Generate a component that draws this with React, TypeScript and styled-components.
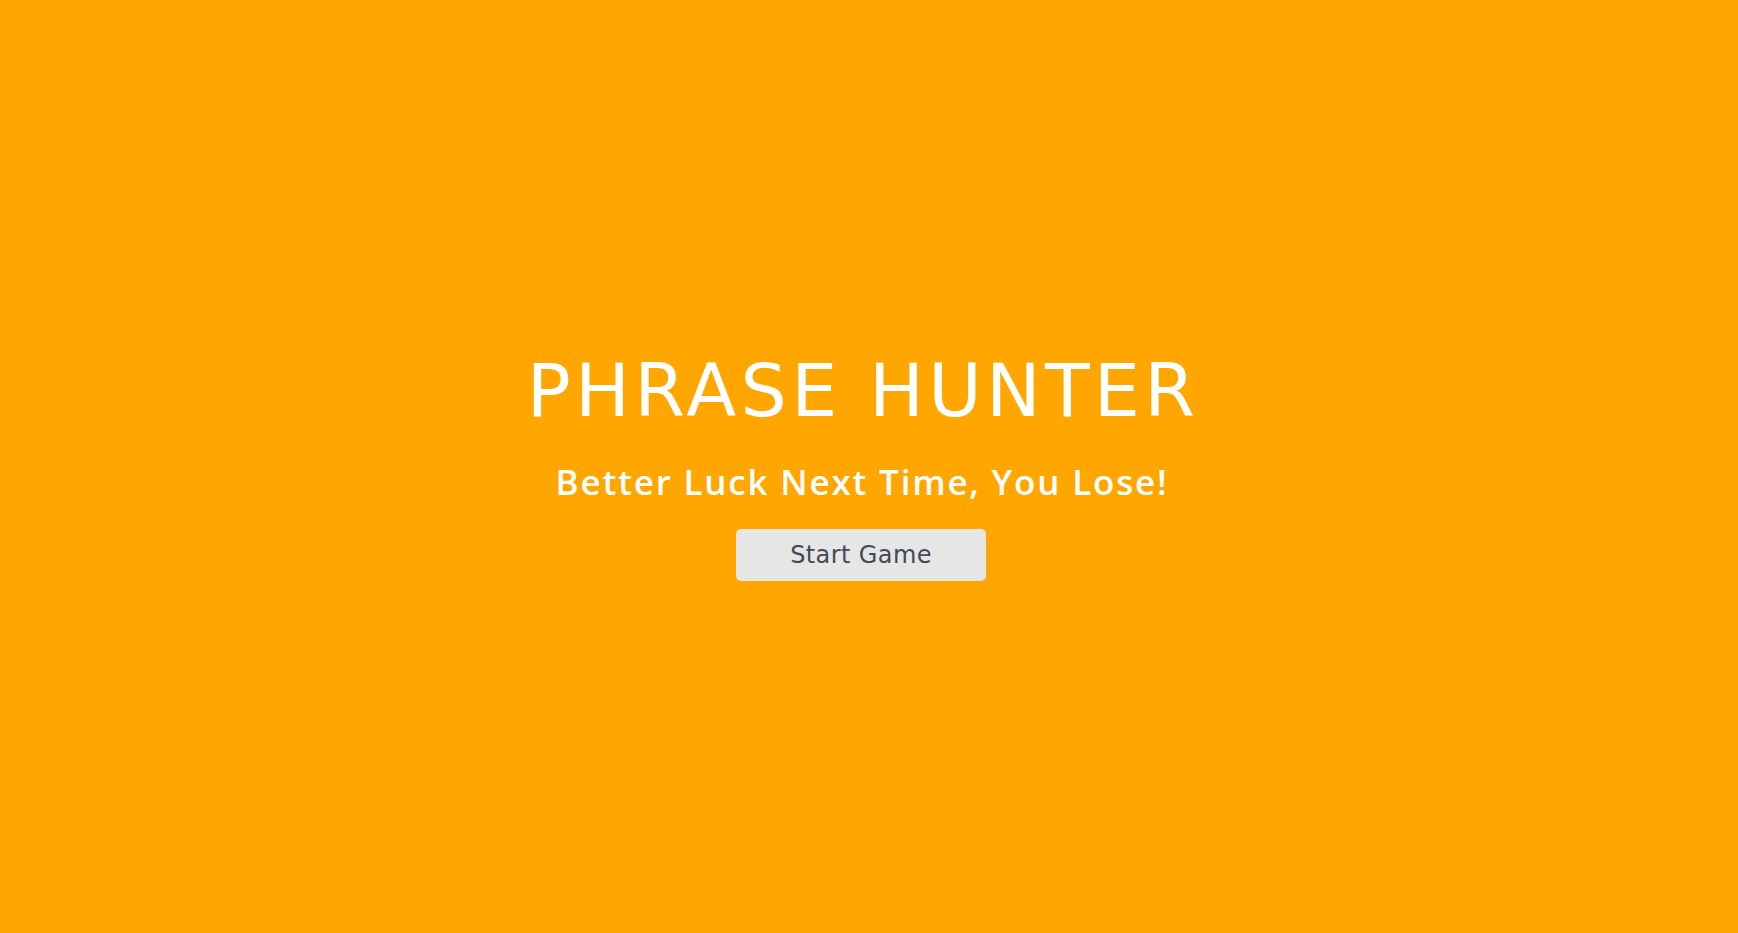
import React from "react";
import styled, { createGlobalStyle } from "styled-components";

const GlobalStyle = createGlobalStyle`
  html, body {
    margin: 0;
    padding: 0;
    background: #ffa600;
  }
  body {
    font-family: "Open Sans", "Liberation Sans", sans-serif;
  }
`;

const Overlay = styled.div`
  min-height: 100vh;
  display: flex;
  flex-direction: column;
  align-items: center;
  justify-content: center;
  background: #ffa600;
  color: #fff;
  text-align: center;
  padding: 0 16px 2px 0;
  box-sizing: border-box;
`;

const Title = styled.h2`
  margin: 0;
  padding: 3px 0 0 4px;
  font-family: "DejaVu Sans", "Open Sans", sans-serif;
  font-size: 73px;
  line-height: 74px;
  font-weight: 400;
  letter-spacing: 4.3px;
`;

const Message = styled.h1`
  margin: 32px 0 0;
  padding-left: 2px;
  font-size: 35px;
  line-height: 44px;
  font-weight: 600;
  letter-spacing: 1.8px;
`;

const StartButton = styled.button`
  margin-top: 25px;
  width: 250px;
  height: 52px;
  border: none;
  border-radius: 5px;
  background: #e6e6e6;
  color: #414b55;
  font-family: "DejaVu Sans", "Open Sans", sans-serif;
  font-size: 24px;
  letter-spacing: 0.4px;
  cursor: pointer;
`;

export default function App() {
  return (
    <>
      <GlobalStyle />
      <Overlay>
        <Title>PHRASE HUNTER</Title>
        <Message>Better Luck Next Time, You Lose!</Message>
        <StartButton>Start Game</StartButton>
      </Overlay>
    </>
  );
}
